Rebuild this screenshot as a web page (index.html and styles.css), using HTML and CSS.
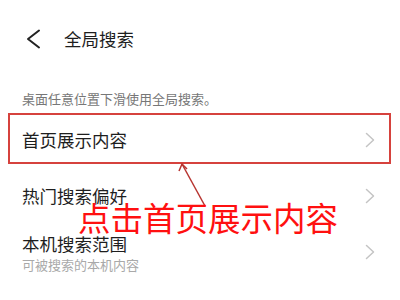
FILE: index.html
```html
<!DOCTYPE html>
<html lang="zh-CN">
<head>
<meta charset="utf-8">
<link rel="stylesheet" href="styles.css">
</head>
<body>
<div class="page">
  <header class="header">
    <svg class="back" width="16" height="20" viewBox="0 0 16 20"><polyline points="13,1.5 2,10 13,18.5" fill="none" stroke="#222" stroke-width="2" stroke-linecap="round" stroke-linejoin="round"/></svg>
    <span class="title">全局搜索</span>
  </header>
  <p class="desc">桌面任意位置下滑使用全局搜索。</p>
  <ul class="list">
    <li class="item">
      <div class="texts"><span class="label">首页展示内容</span></div>
      <svg class="chev" width="10" height="16" viewBox="0 0 10 16"><polyline points="1.5,1.5 8.5,8 1.5,14.5" fill="none" stroke="#c4c4c4" stroke-width="1.5" stroke-linecap="round" stroke-linejoin="round"/></svg>
    </li>
    <li class="item">
      <div class="texts"><span class="label">热门搜索偏好</span></div>
      <svg class="chev" width="10" height="16" viewBox="0 0 10 16"><polyline points="1.5,1.5 8.5,8 1.5,14.5" fill="none" stroke="#c4c4c4" stroke-width="1.5" stroke-linecap="round" stroke-linejoin="round"/></svg>
    </li>
    <li class="item item-tall">
      <div class="texts"><span class="label">本机搜索范围</span><span class="sub">可被搜索的本机内容</span></div>
      <svg class="chev" width="10" height="16" viewBox="0 0 10 16"><polyline points="1.5,1.5 8.5,8 1.5,14.5" fill="none" stroke="#c4c4c4" stroke-width="1.5" stroke-linecap="round" stroke-linejoin="round"/></svg>
    </li>
  </ul>
  <div class="highlight"></div>
  <svg class="arrow" width="400" height="300" viewBox="0 0 400 300"><line x1="205" y1="206" x2="182" y2="164" stroke="#b73430" stroke-width="1.5"/><polyline points="179,171 182,164 187,169" fill="none" stroke="#b73430" stroke-width="1.5"/></svg>
  <div class="callout">点击首页展示内容</div>
</div>
</body>
</html>
```
FILE: styles.css
```css
* { box-sizing: border-box; }
html, body { margin: 0; padding: 0; background: #fff; }
body {
  font-family: "Noto Sans CJK SC", "Noto Sans", sans-serif;
  color: #1e1e1e;
}
.page { position: relative; width: 400px; height: 300px; overflow: hidden; }
.header {
  height: 78px;
  display: flex;
  align-items: center;
  padding-left: 26px;
}
.back { display: block; }
.title {
  margin-left: 22px;
  font-size: 17.5px;
  line-height: 22px;
  color: #1e1e1e;
}
.desc {
  margin: 0;
  padding: 12px 0 3.5px 22px;
  font-size: 13px;
  line-height: 18px;
  color: #777;
}
.list { list-style: none; margin: 0; padding: 0; }
.item {
  height: 56px;
  display: flex;
  align-items: center;
  justify-content: space-between;
  padding: 0 25px 0 22px;
}
.item-tall { height: 57px; align-items: center; }
.texts { display: flex; flex-direction: column; }
.label { font-size: 17.5px; line-height: 22px; }
.sub { font-size: 13px; line-height: 18px; color: #a9a9a9; margin-top: 1px; }
.item-tall .texts { padding-top: 2px; }
.chev { display: block; }
.highlight {
  position: absolute;
  left: 8px;
  top: 113px;
  width: 383px;
  height: 51px;
  border: 2px solid #d6423d;
}
.arrow { position: absolute; left: 0; top: 0; }
.callout {
  position: absolute;
  left: 78px;
  top: 200px;
  font-size: 32.5px;
  line-height: 34px;
  color: #ff1010;
  white-space: nowrap;
}
```
